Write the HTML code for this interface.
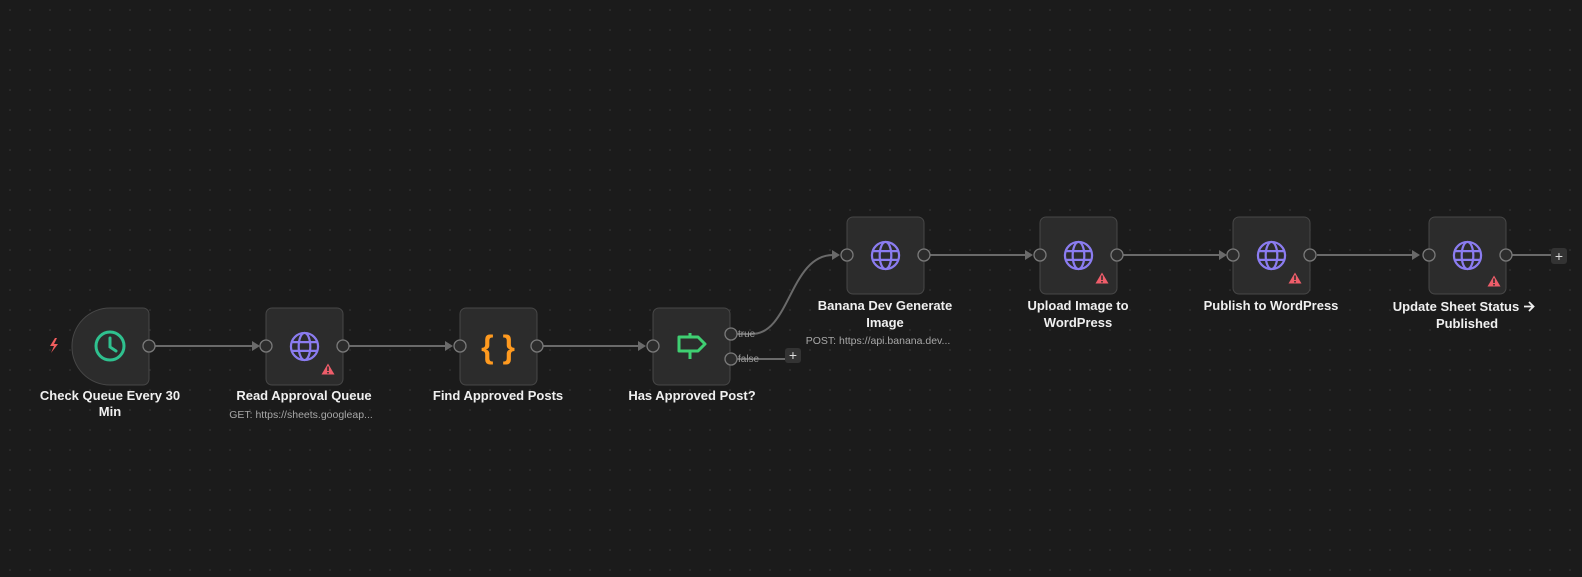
<!DOCTYPE html>
<html><head><meta charset="utf-8"><style>
html,body{margin:0;padding:0;background:#1b1b1b;width:1582px;height:577px;overflow:hidden}
svg{display:block}
text{font-family:"Liberation Sans","DejaVu Sans",sans-serif}
.l{fill:#f0f0f0;font-size:13px;font-weight:bold;text-anchor:middle}
.s{fill:#a8a8a8;font-size:10.5px;text-anchor:middle}
.n{fill:#2c2c2c;stroke:#474747;stroke-width:1}
.h{fill:#2c2c2c;stroke:#7a7a7a;stroke-width:1.3}
.e{stroke:#6a6a6a;stroke-width:2;fill:none}
.g{fill:none;stroke:#8b7cf0;stroke-width:2.3}
</style></head><body>
<svg width="1582" height="577" viewBox="0 0 1582 577">
<defs>
<pattern id="dots" width="20" height="20" patternUnits="userSpaceOnUse">
<circle cx="10" cy="10" r="0.8" fill="#3a3a3a"/></pattern>
<symbol id="globe" viewBox="0 0 32 32"><circle cx="16" cy="16" r="14" class="g"/><ellipse cx="16" cy="16" rx="6" ry="14" class="g"/><path d="M3.5 11.5H28.5M3.5 20.5H28.5" class="g"/></symbol>
<symbol id="warn" viewBox="0 0 14 12"><path d="M7 0.5L13.5 11.5H0.5Z" fill="#ef5d6a"/><rect x="6.2" y="3.5" width="1.6" height="4.5" fill="#2c2c2c"/><rect x="6.2" y="9" width="1.6" height="1.5" fill="#2c2c2c"/></symbol>
</defs>
<rect width="1582" height="577" fill="url(#dots)"/>

<path class="e" d="M155 346H255"/><path d="M252 341L260 346L252 351Z" fill="#6a6a6a"/>
<path class="e" d="M349 346H448"/><path d="M445 341L453 346L445 351Z" fill="#6a6a6a"/>
<path class="e" d="M543 346H641"/><path d="M638 341L646 346L638 351Z" fill="#6a6a6a"/>
<path class="e" d="M737 334H752C790 334 790 255 833 255H835"/><path d="M832 250L840 255L832 260Z" fill="#6a6a6a"/>
<path class="e" d="M737 359H792"/>
<path class="e" d="M930 255H1028"/><path d="M1025 250L1033 255L1025 260Z" fill="#6a6a6a"/>
<path class="e" d="M1123 255H1222"/><path d="M1219 250L1227 255L1219 260Z" fill="#6a6a6a"/>
<path class="e" d="M1317 255H1415"/><path d="M1412 250L1420 255L1412 260Z" fill="#6a6a6a"/>
<path class="e" d="M1510 255H1551"/>

<path d="M55 338L50 346H54L51 353L58 344H54L57 338Z" fill="#ef5d5d"/>
<path class="n" d="M110 308H143a6 6 0 0 1 6 6V379a6 6 0 0 1-6 6H110a38 38 0 0 1-38-38.5A38 38 0 0 1 110 308Z"/>
<circle cx="110" cy="346" r="14" fill="none" stroke="#2fc18f" stroke-width="3"/>
<path d="M110 338V347L116 351" fill="none" stroke="#2fc18f" stroke-width="3" stroke-linecap="round"/>
<circle cx="149" cy="346" r="6" class="h"/>
<text class="l" x="110" y="400">Check Queue Every 30</text>
<text class="l" x="110" y="416">Min</text>

<rect x="266" y="308" width="77" height="77" rx="6" class="n"/>
<use href="#globe" x="289" y="331" width="31" height="31"/>
<use href="#warn" x="321" y="363" width="14" height="12"/>
<circle cx="266" cy="346" r="6" class="h"/><circle cx="343" cy="346" r="6" class="h"/>
<text class="l" x="304" y="400">Read Approval Queue</text>
<text class="s" x="301" y="418">GET: https://sheets.googleap...</text>

<rect x="460" y="308" width="77" height="77" rx="6" class="n"/>
<text x="498" y="358" fill="#ff9a1f" font-size="32" font-weight="bold" font-family="Liberation Sans,sans-serif" text-anchor="middle">{ }</text>
<circle cx="460" cy="346" r="6" class="h"/><circle cx="537" cy="346" r="6" class="h"/>
<text class="l" x="498" y="400">Find Approved Posts</text>

<rect x="653" y="308" width="77" height="77" rx="6" class="n"/>
<path d="M679 337H698L705 344L698 351H679Z M690 333V337 M690 351V359" fill="none" stroke="#3fcf72" stroke-width="3" stroke-linejoin="round"/>
<circle cx="653" cy="346" r="6" class="h"/>
<circle cx="731" cy="334" r="6" class="h"/><circle cx="731" cy="359" r="6" class="h"/>
<text x="738" y="337" fill="#9a9a9a" font-size="10">true</text>
<text x="738" y="362" fill="#9a9a9a" font-size="10">false</text>
<rect x="785" y="348" width="16" height="15" rx="3" fill="#333"/>
<text x="793" y="360" fill="#ddd" font-size="14" text-anchor="middle">+</text>
<text class="l" x="692" y="400">Has Approved Post?</text>

<rect x="847" y="217" width="77" height="77" rx="6" class="n"/>
<use href="#globe" x="870" y="240" width="31" height="31"/>
<circle cx="847" cy="255" r="6" class="h"/><circle cx="924" cy="255" r="6" class="h"/>
<text class="l" x="885" y="310">Banana Dev Generate</text>
<text class="l" x="885" y="327">Image</text>
<text class="s" x="878" y="344">POST: https://api.banana.dev...</text>

<rect x="1040" y="217" width="77" height="77" rx="6" class="n"/>
<use href="#globe" x="1063" y="240" width="31" height="31"/>
<use href="#warn" x="1095" y="272" width="14" height="12"/>
<circle cx="1040" cy="255" r="6" class="h"/><circle cx="1117" cy="255" r="6" class="h"/>
<text class="l" x="1078" y="310">Upload Image to</text>
<text class="l" x="1078" y="327">WordPress</text>

<rect x="1233" y="217" width="77" height="77" rx="6" class="n"/>
<use href="#globe" x="1256" y="240" width="31" height="31"/>
<use href="#warn" x="1288" y="272" width="14" height="12"/>
<circle cx="1233" cy="255" r="6" class="h"/><circle cx="1310" cy="255" r="6" class="h"/>
<text class="l" x="1271" y="310">Publish to WordPress</text>

<rect x="1429" y="217" width="77" height="77" rx="6" class="n"/>
<use href="#globe" x="1452" y="240" width="31" height="31"/>
<use href="#warn" x="1487" y="275" width="14" height="12"/>
<circle cx="1429" cy="255" r="6" class="h"/><circle cx="1506" cy="255" r="6" class="h"/>
<text class="l" x="1456" y="311">Update Sheet Status</text>
<path d="M1524 306.5H1533M1529 302L1533.5 306.5L1529 311" fill="none" stroke="#f0f0f0" stroke-width="1.8"/>
<text class="l" x="1467" y="328">Published</text>
<rect x="1551" y="248" width="16" height="16" rx="3" fill="#333"/>
<text x="1559" y="261" fill="#ddd" font-size="14" text-anchor="middle">+</text>
</svg>
</body></html>
